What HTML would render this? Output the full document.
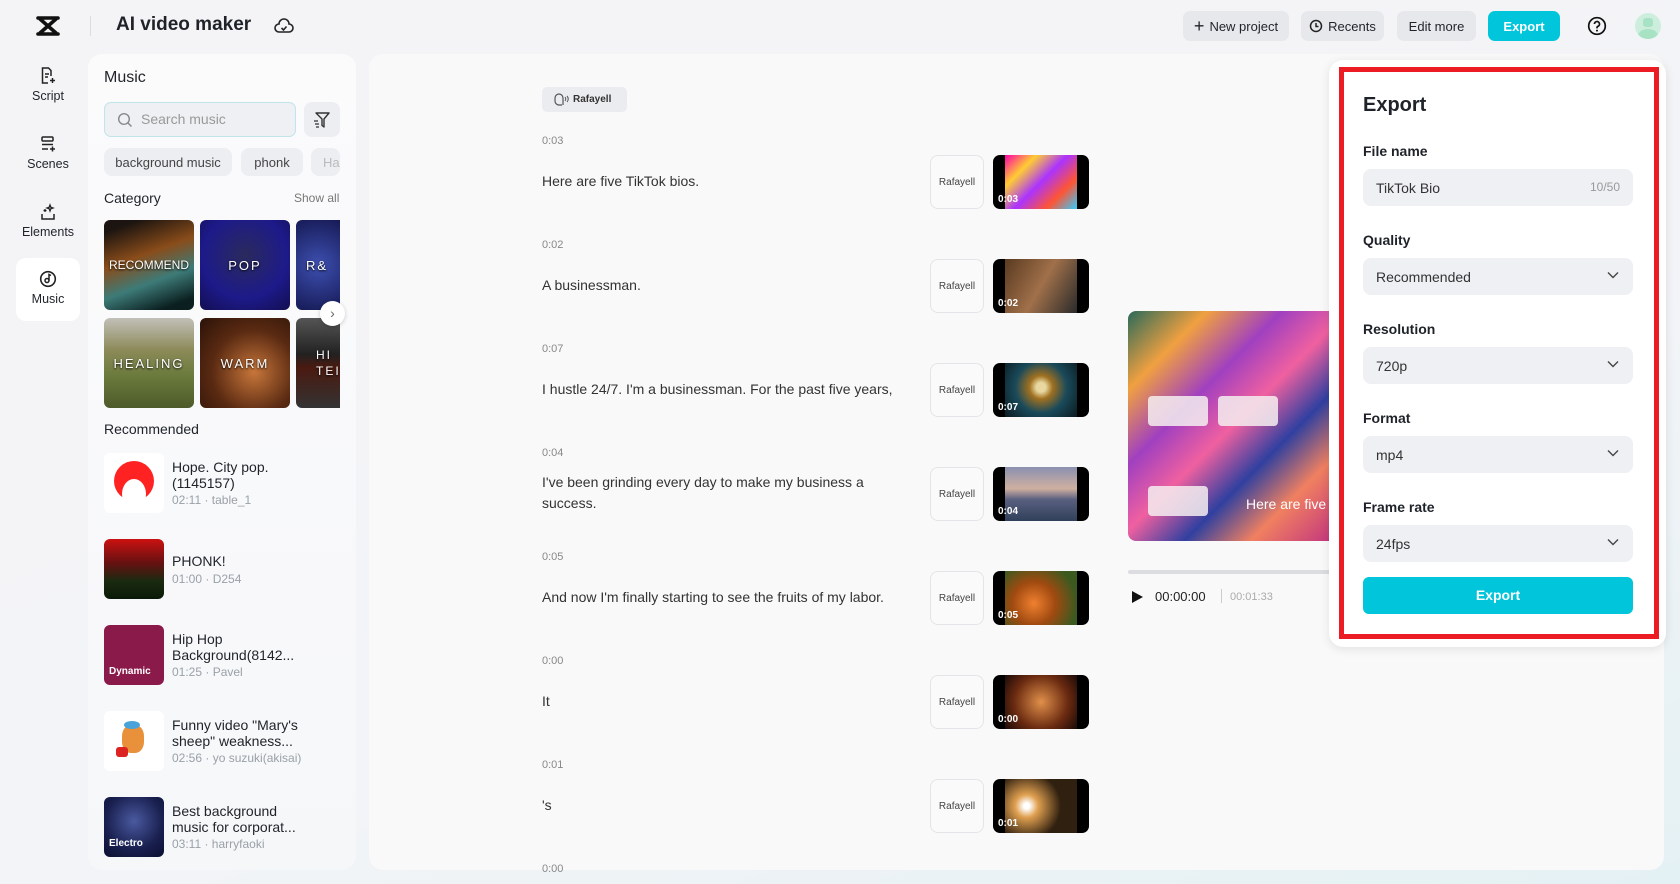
<!DOCTYPE html>
<html><head><meta charset="utf-8"><style>
*{box-sizing:border-box;margin:0;padding:0}
body{width:1680px;height:884px;overflow:hidden;font-family:"Liberation Sans",sans-serif;color:#1f2329;background:linear-gradient(160deg,#f4f4f6 0%,#f3f4f7 60%,#e4f1f4 100%);position:relative}
.a{position:absolute}
.btn{position:absolute;top:11px;height:30px;border-radius:7px;background:#e6e8eb;font-size:13px;color:#1f2329;display:flex;align-items:center;justify-content:center;gap:5px}
.nav{position:absolute;left:16px;width:64px;text-align:center;font-size:12.5px;color:#1f2329}
.nav svg{display:block;margin:0 auto 4px}
.tag{position:absolute;top:148px;height:28px;border-radius:8px;background:#eceef1;font-size:13px;color:#444;display:flex;align-items:center;justify-content:center}
.tile{position:absolute;width:90px;height:90px;border-radius:6px;color:#fff;font-size:13px;letter-spacing:2px;display:flex;align-items:center;justify-content:center;text-shadow:0 1px 2px #000;overflow:hidden}
.item{position:absolute;left:104px;width:240px;height:60px}
.item .th{position:absolute;left:0;top:0;width:60px;height:60px;border-radius:6px;overflow:hidden}
.item .t{position:absolute;left:68px;font-size:14px;line-height:16px;color:#1f2329}
.item .s{position:absolute;left:68px;font-size:12px;color:#9aa0a8}
.row .tm{position:absolute;left:542px;font-size:11px;color:#888}
.row .tx{position:absolute;left:542px;font-size:14px;color:#333;line-height:21px;width:380px}
.rb{position:absolute;left:930px;width:54px;height:54px;border:1px solid #e3e5e8;border-radius:8px;background:#fafafa;font-size:10px;color:#444;display:flex;align-items:center;justify-content:center}
.vt{position:absolute;left:993px;width:96px;height:54px;border-radius:7px;background:#000;overflow:hidden}
.vt i{position:absolute;left:12px;right:12px;top:0;bottom:0}
.vt b{position:absolute;left:5px;bottom:4px;color:#fff;font-size:10px;font-weight:bold}
.lbl{position:absolute;left:1363px;font-size:14px;font-weight:bold;color:#1f2329}
.sel{position:absolute;left:1363px;width:270px;height:37px;border-radius:8px;background:#eef0f3;font-size:14px;color:#333;padding-left:13px;display:flex;align-items:center}
.sel svg{position:absolute;right:14px;top:13px}
</style></head><body>
<!-- header -->
<svg class="a" style="left:35px;top:15px" width="26" height="22" viewBox="0 0 26 22"><path d="M3 3h20M3 19h20M5 4l16 14M21 4L5 18" stroke="#111" stroke-width="3.6" fill="none" stroke-linecap="round"/></svg>
<div class="a" style="left:90px;top:16px;width:1px;height:20px;background:#ddd"></div>
<div class="a" style="left:116px;top:14px;font-size:19px;font-weight:bold;color:#1f2329">AI video maker</div>
<svg class="a" style="left:274px;top:16px" width="20" height="20" viewBox="0 0 20 20"><path d="M5 16a4 4 0 0 1 0-8 5 5 0 0 1 10 0 4 4 0 0 1 0 8z" stroke="#222" stroke-width="1.6" fill="none"/><path d="M7.5 12l2 2 3-3.5" stroke="#222" stroke-width="1.6" fill="none"/></svg>
<div class="btn" style="left:1183px;width:106px"><span style="font-size:18px;font-weight:300">+</span>New project</div>
<div class="btn" style="left:1301px;width:83px"><svg width="14" height="14" viewBox="0 0 14 14"><circle cx="7" cy="7" r="5.5" stroke="#222" stroke-width="1.5" fill="none"/><path d="M7 4v3.5h2.5" stroke="#222" stroke-width="1.5" fill="none"/></svg>Recents</div>
<div class="btn" style="left:1397px;width:79px">Edit more</div>
<div class="btn" style="left:1488px;width:72px;background:#00c5db;color:#fff;font-weight:bold">Export</div>
<svg class="a" style="left:1587px;top:16px" width="20" height="20" viewBox="0 0 20 20"><circle cx="10" cy="10" r="8.3" stroke="#111" stroke-width="1.7" fill="none"/><path d="M7.5 8a2.5 2.5 0 1 1 3.5 2.3c-.7.3-1 .8-1 1.5v.6" stroke="#111" stroke-width="1.7" fill="none"/><circle cx="10" cy="14.6" r="1" fill="#111"/></svg>
<div class="a" style="left:1635px;top:13px;width:26px;height:26px;border-radius:50%;background:#cdeedd;overflow:hidden"><div class="a" style="left:8px;top:5px;width:10px;height:9px;border-radius:3px;background:#a6e2c3"></div><div class="a" style="left:3px;top:16px;width:20px;height:14px;border-radius:50%;background:#a6e2c3"></div></div>
<!-- left nav -->
<div class="nav" style="top:67px"><svg width="18" height="18" viewBox="0 0 18 18"><path d="M12 9V3.5L9.5 1H3.5v15H9" stroke="#222" stroke-width="1.5" fill="none"/><path d="M6 7h4M6 10h3M13.5 11v5M11 13.5h5" stroke="#222" stroke-width="1.5"/></svg>Script</div>
<div class="nav" style="top:135px"><svg width="18" height="18" viewBox="0 0 18 18"><rect x="3" y="2" width="11" height="4" rx="1" stroke="#222" stroke-width="1.5" fill="none"/><path d="M3 9.5h11M3 14h6M13.5 11.5v5M11 14h5" stroke="#222" stroke-width="1.5"/></svg>Scenes</div>
<div class="nav" style="top:203px"><svg width="18" height="18" viewBox="0 0 18 18"><path d="M3 11v5h12v-5" stroke="#222" stroke-width="1.5" fill="none"/><path d="M11 2l.8 2.2L14 5l-2.2.8L11 8l-.8-2.2L8 5l2.2-.8zM6 6v3M4.5 7.5h3" stroke="#222" stroke-width="1.3" fill="none"/></svg>Elements</div>
<div class="a" style="left:16px;top:258px;width:64px;height:63px;border-radius:10px;background:#fff"></div>
<div class="nav" style="top:270px"><svg width="18" height="18" viewBox="0 0 18 18"><circle cx="9" cy="9" r="7.3" stroke="#222" stroke-width="1.6" fill="none"/><circle cx="8" cy="10.5" r="2" stroke="#222" stroke-width="1.5" fill="none"/><path d="M10 10.5V4.5l2 1" stroke="#222" stroke-width="1.5" fill="none"/></svg>Music</div>
<!-- music panel -->
<div class="a" style="left:88px;top:54px;width:268px;height:816px;border-radius:14px;background:linear-gradient(180deg,#fbfbfc,#f6f7f9)"></div>
<div class="a" style="left:104px;top:69px;font-size:16px;color:#1f2329">Music</div>
<div class="a" style="left:104px;top:102px;width:192px;height:35px;border-radius:7px;background:#eef0f3;border:1px solid #bfe4ea"></div>
<svg class="a" style="left:117px;top:112px" width="16" height="16" viewBox="0 0 16 16"><circle cx="7" cy="7" r="5.3" stroke="#888" stroke-width="1.4" fill="none"/><path d="M11 11l3.5 3.5" stroke="#888" stroke-width="1.4"/></svg>
<div class="a" style="left:141px;top:111px;font-size:14px;color:#999">Search music</div>
<div class="a" style="left:304px;top:102px;width:36px;height:35px;border-radius:8px;background:#eceef1"></div>
<svg class="a" style="left:313px;top:111px" width="18" height="18" viewBox="0 0 18 18"><path d="M3 2h13l-5 6v8l-2-1.5V8z" stroke="#333" stroke-width="1.4" fill="none" stroke-linejoin="round"/><path d="M1 10h4M2 13h4M3 16h3" stroke="#333" stroke-width="1.3"/></svg>
<div class="tag" style="left:104px;width:128px">background music</div>
<div class="tag" style="left:241px;width:62px">phonk</div>
<div class="tag" style="left:311px;width:29px;color:#bbb;justify-content:flex-start;padding-left:12px;overflow:hidden">Ha</div>
<div class="a" style="left:104px;top:190px;font-size:14px;color:#1f2329">Category</div>
<div class="a" style="left:294px;top:191px;font-size:12px;color:#777">Show all</div>
<div class="tile" style="left:104px;top:220px;background:linear-gradient(160deg,#1b1410 10%,#8a4c1a 40%,#3d7b78 65%,#0b1f20 90%);letter-spacing:0;font-size:12px">RECOMMEND</div>
<div class="tile" style="left:200px;top:220px;background:radial-gradient(circle at 50% 40%,#2a2a5c,#1d1a8a 60%,#120e50)">POP</div>
<div class="tile" style="left:296px;top:220px;width:44px;border-radius:6px 0 0 6px;background:radial-gradient(circle,#3d4fb0,#161a55);justify-content:flex-start;padding-left:10px">R&amp;</div>
<div class="tile" style="left:104px;top:318px;background:linear-gradient(180deg,#c2c0b8 0%,#8d8b5a 35%,#6a7a3c 65%,#4d5a2a 100%)">HEALING</div>
<div class="tile" style="left:200px;top:318px;background:radial-gradient(circle at 60% 60%,#c7763a,#5a2a12 55%,#2a1208)">WARM</div>
<div class="tile" style="left:296px;top:318px;width:44px;border-radius:6px 0 0 6px;background:linear-gradient(180deg,#555 0%,#222 40%,#4a1a10 55%,#333 100%);font-size:12px;justify-content:flex-start;padding-left:20px;line-height:16px">HI<br>TEI</div>
<div class="a" style="left:320px;top:301px;width:25px;height:25px;border-radius:50%;background:#fff;box-shadow:0 1px 4px rgba(0,0,0,.2);font-size:14px;color:#666;text-align:center;line-height:24px">›</div>
<div class="a" style="left:104px;top:421px;font-size:14px;color:#1f2329">Recommended</div>
<div class="item" style="top:453px"><div class="th" style="background:#fff"><div class="a" style="left:10px;top:8px;width:40px;height:40px;border-radius:50%;background:#f22"></div><div class="a" style="left:18px;top:26px;width:24px;height:30px;border-radius:50%;background:#fff"></div></div><div class="t" style="top:6px">Hope. City pop.<br>(1145157)</div><div class="s" style="top:40px">02:11 · table_1</div></div>
<div class="item" style="top:539px"><div class="th" style="background:linear-gradient(180deg,#c11 0%,#611 40%,#1a2a10 70%,#0a1a08)"></div><div class="t" style="top:14px">PHONK!</div><div class="s" style="top:33px">01:00 · D254</div></div>
<div class="item" style="top:625px"><div class="th" style="background:#8a1a4a"><span class="a" style="left:5px;bottom:8px;color:#fff;font-size:10px;font-weight:bold">Dynamic</span></div><div class="t" style="top:6px">Hip Hop<br>Background(8142...</div><div class="s" style="top:40px">01:25 · Pavel</div></div>
<div class="item" style="top:711px"><div class="th" style="background:#fff"><div class="a" style="left:18px;top:14px;width:22px;height:28px;border-radius:40%;background:#e8903a"></div><div class="a" style="left:20px;top:10px;width:16px;height:8px;border-radius:50%;background:#4aa3d8"></div><div class="a" style="left:12px;top:36px;width:12px;height:10px;background:#d22;border-radius:3px"></div></div><div class="t" style="top:6px">Funny video "Mary's<br>sheep" weakness...</div><div class="s" style="top:40px">02:56 · yo suzuki(akisai)</div></div>
<div class="item" style="top:797px"><div class="th" style="background:radial-gradient(circle at 50% 40%,#4a5aa0,#1a2050 60%,#0a0f30)"><span class="a" style="left:5px;bottom:8px;color:#fff;font-size:10px;font-weight:bold">Electro</span></div><div class="t" style="top:6px">Best background<br>music for corporat...</div><div class="s" style="top:40px">03:11 · harryfaoki</div></div>
<!-- main -->
<div class="a" style="left:369px;top:54px;width:1295px;height:816px;border-radius:14px;background:#f9f9fa"></div>
<div class="a" style="left:542px;top:87px;width:85px;height:25px;border-radius:5px;background:#eaecef;font-size:10px;font-weight:bold;color:#333;padding-left:31px;line-height:25px">Rafayell</div>
<svg class="a" style="left:553px;top:92px" width="16" height="15" viewBox="0 0 16 15"><path d="M9 13H6a4 4 0 0 1-4-4V6a4 4 0 0 1 8 0v7" stroke="#555" stroke-width="1.2" fill="none"/><path d="M12 5q1.5 2 0 4M14 4q2.5 3 0 6" stroke="#555" stroke-width="1" fill="none"/></svg>

<div class="row"><div class="tm" style="top:135px">0:03</div><div class="tx" style="top:171px">Here are five TikTok bios.</div></div>
<div class="rb" style="top:155px">Rafayell</div><div class="vt" style="top:155px"><i style="background:linear-gradient(135deg,#f0a 0%,#fc3 25%,#a3f 50%,#f53 75%,#3cf)"></i><b>0:03</b></div>
<div class="row"><div class="tm" style="top:239px">0:02</div><div class="tx" style="top:275px">A businessman.</div></div>
<div class="rb" style="top:259px">Rafayell</div><div class="vt" style="top:259px"><i style="background:linear-gradient(120deg,#5a3a20,#a0704a 50%,#2a2a2a)"></i><b>0:02</b></div>
<div class="row"><div class="tm" style="top:343px">0:07</div><div class="tx" style="top:379px">I hustle 24/7. I'm a businessman. For the past five years,</div></div>
<div class="rb" style="top:363px">Rafayell</div><div class="vt" style="top:363px"><i style="background:radial-gradient(circle at 50% 45%,#e8d8a0 10%,#a07020 25%,#1a4a5a 55%,#0a1a20)"></i><b>0:07</b></div>
<div class="row"><div class="tm" style="top:447px">0:04</div><div class="tx" style="top:472px">I've been grinding every day to make my business a success.</div></div>
<div class="rb" style="top:467px">Rafayell</div><div class="vt" style="top:467px"><i style="background:linear-gradient(180deg,#8a90b0,#d0b0a0 40%,#5a6080 60%,#30405a)"></i><b>0:04</b></div>
<div class="row"><div class="tm" style="top:551px">0:05</div><div class="tx" style="top:587px">And now I'm finally starting to see the fruits of my labor.</div></div>
<div class="rb" style="top:571px">Rafayell</div><div class="vt" style="top:571px"><i style="background:radial-gradient(circle at 40% 60%,#f08030,#a04a10 40%,#3a5a20 80%)"></i><b>0:05</b></div>
<div class="row"><div class="tm" style="top:655px">0:00</div><div class="tx" style="top:691px">It</div></div>
<div class="rb" style="top:675px">Rafayell</div><div class="vt" style="top:675px"><i style="background:radial-gradient(circle at 50% 50%,#e0904a,#6a2a10 60%,#1a0a08)"></i><b>0:00</b></div>
<div class="row"><div class="tm" style="top:759px">0:01</div><div class="tx" style="top:795px">'s</div></div>
<div class="rb" style="top:779px">Rafayell</div><div class="vt" style="top:779px"><i style="background:radial-gradient(circle at 30% 50%,#fff 5%,#e0a050 20%,#302010 60%)"></i><b>0:01</b></div>
<div class="tm a" style="left:542px;top:863px;font-size:11px;color:#888">0:00</div>
<!-- preview -->
<div class="a" style="left:1128px;top:311px;width:210px;height:230px;border-radius:8px 0 0 8px;overflow:hidden;background:linear-gradient(135deg,#2a6a5a 0%,#f0a040 18%,#a040c0 35%,#f060a0 50%,#3040a0 65%,#f08060 80%,#c03080 100%)">
<div class="a" style="left:20px;top:85px;width:60px;height:30px;background:#f4eef0;border-radius:4px;opacity:.85"></div>
<div class="a" style="left:90px;top:85px;width:60px;height:30px;background:#f4eef0;border-radius:4px;opacity:.85"></div>
<div class="a" style="left:20px;top:175px;width:60px;height:30px;background:#f4eef0;border-radius:4px;opacity:.85"></div>
<div class="a" style="left:118px;top:185px;color:#fff;font-size:14px;white-space:nowrap">Here are five</div></div>
<div class="a" style="left:1128px;top:570px;width:210px;height:4px;background:#dcdde0;border-radius:2px"></div>
<svg class="a" style="left:1131px;top:590px" width="13" height="14" viewBox="0 0 13 14"><path d="M1 1l11 6-11 6z" fill="#111"/></svg>
<div class="a" style="left:1155px;top:589px;font-size:13px;color:#222">00:00:00</div>
<div class="a" style="left:1221px;top:589px;width:1px;height:14px;background:#ccc"></div>
<div class="a" style="left:1230px;top:591px;font-size:11px;color:#aaa">00:01:33</div>
<!-- export panel -->
<div class="a" style="left:1329px;top:60px;width:337px;height:587px;border-radius:14px;background:#fff;box-shadow:0 2px 10px rgba(0,0,0,.1)"></div>
<div class="a" style="left:1339px;top:67px;width:320px;height:572px;border:5px solid #ec1c24"></div>
<div class="a" style="left:1363px;top:94px;font-size:20px;font-weight:bold;color:#1f2329">Export</div>
<div class="lbl" style="top:143px">File name</div>
<div class="sel" style="top:169px">TikTok Bio<span class="a" style="right:13px;top:11px;font-size:12px;color:#999">10/50</span></div>
<div class="lbl" style="top:232px">Quality</div>
<div class="sel" style="top:258px">Recommended<svg width="12" height="8" viewBox="0 0 12 8"><path d="M1 1.5l5 5 5-5" stroke="#444" stroke-width="1.4" fill="none"/></svg></div>
<div class="lbl" style="top:321px">Resolution</div>
<div class="sel" style="top:347px">720p<svg width="12" height="8" viewBox="0 0 12 8"><path d="M1 1.5l5 5 5-5" stroke="#444" stroke-width="1.4" fill="none"/></svg></div>
<div class="lbl" style="top:410px">Format</div>
<div class="sel" style="top:436px">mp4<svg width="12" height="8" viewBox="0 0 12 8"><path d="M1 1.5l5 5 5-5" stroke="#444" stroke-width="1.4" fill="none"/></svg></div>
<div class="lbl" style="top:499px">Frame rate</div>
<div class="sel" style="top:525px">24fps<svg width="12" height="8" viewBox="0 0 12 8"><path d="M1 1.5l5 5 5-5" stroke="#444" stroke-width="1.4" fill="none"/></svg></div>
<div class="a" style="left:1363px;top:577px;width:270px;height:37px;border-radius:6px;background:#00c5db;color:#fff;font-weight:bold;font-size:14px;text-align:center;line-height:37px">Export</div>
</body></html>
